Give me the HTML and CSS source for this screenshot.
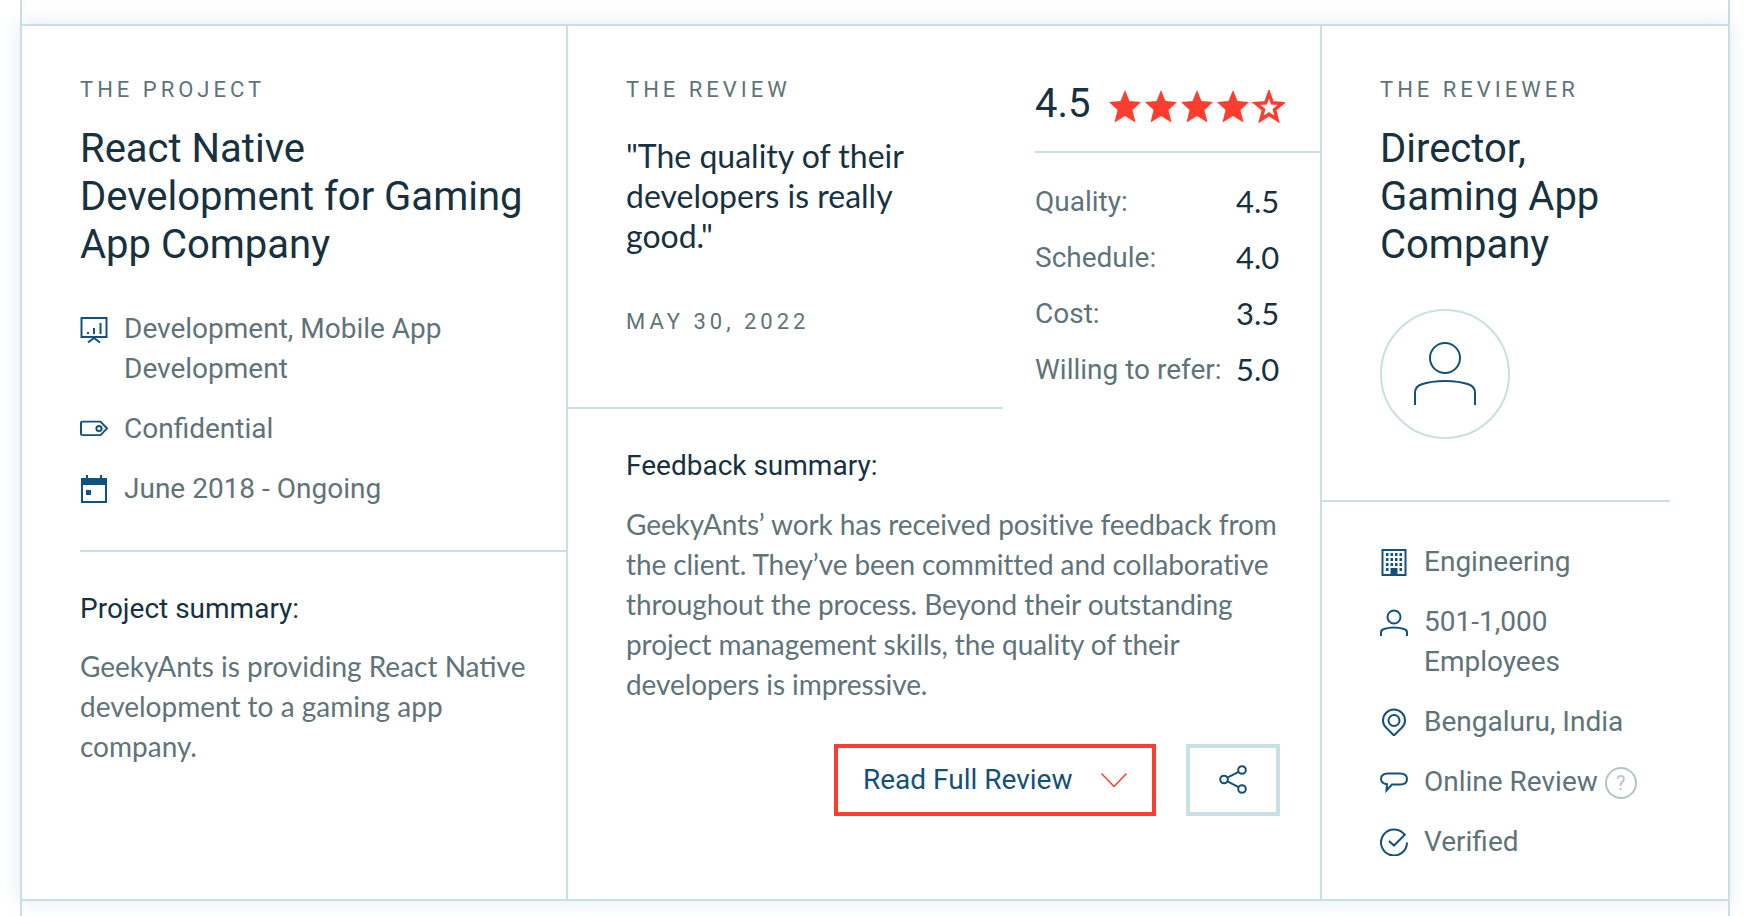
FILE: index.html
```html
<!DOCTYPE html>
<html lang="en">
<head>
    <meta charset="UTF-8">
    <title>Review card</title>
    <link rel="stylesheet" href="styles.css">
</head>
<body>
    <div class="stub stub-top"></div>

    <div class="review-card">

        <!-- Project column -->
        <section class="col col-project">
            <div class="project-head">
                <div class="label">THE PROJECT</div>
                <h3 class="title">React Native Development for Gaming App Company</h3>
                <ul class="facts">
                    <li>
                        <svg class="icon" viewBox="0 0 28 28"><path d="M1.500 3h25v19h-25zM8 19v-2M14 19v-6M20.500 19V8M14 22v1.500M8 27.500l6-4.500 6 4.500"/></svg>
                        <span>Development, Mobile App Development</span>
                    </li>
                    <li>
                        <svg class="icon" viewBox="0 0 28 28"><path d="M2.500 6h18l6.500 8-6.500 8h-18A1.500 1.500 0 0 1 1 20.500v-13A1.500 1.500 0 0 1 2.500 6z" transform="translate(0 1.500) scale(1 .85)"/><circle cx="19" cy="13.500" r="2.600"/></svg>
                        <span>Confidential</span>
                    </li>
                    <li>
                        <svg class="icon" viewBox="0 0 28 28"><path d="M2 4h24v23H2z"/><path class="fill" d="M2 3h24v7H2zM6 0h2v3H6zM20 0h2v3h-2zM6 15h5v5H6z"/></svg>
                        <span>June 2018 - Ongoing</span>
                    </li>
                </ul>
            </div>
            <div class="summary">
                <h4>Project summary:</h4>
                <p>GeekyAnts is providing React Native development to a gaming app company.</p>
            </div>
        </section>

        <!-- Review column -->
        <section class="col col-review">
            <div class="review-top">
                <div class="review-intro">
                    <div class="label">THE REVIEW</div>
                    <p class="quote">"The quality of their developers is really good."</p>
                    <div class="label date">MAY 30, 2022</div>
                </div>
                <div class="rating">
                    <div class="rating-head">
                        <span class="score">4.5</span>
                        <svg class="stars" viewBox="0 0 176 33">
                            <polygon points="16,0 20.500,11 32,12 23.500,20 26.500,32.500 16,26 5.500,32.500 8.500,20 0,12 11.500,11"/>
                            <polygon transform="translate(36 0)" points="16,0 20.500,11 32,12 23.500,20 26.500,32.500 16,26 5.500,32.500 8.500,20 0,12 11.500,11"/>
                            <polygon transform="translate(72 0)" points="16,0 20.500,11 32,12 23.500,20 26.500,32.500 16,26 5.500,32.500 8.500,20 0,12 11.500,11"/>
                            <polygon transform="translate(108 0)" points="16,0 20.500,11 32,12 23.500,20 26.500,32.500 16,26 5.500,32.500 8.500,20 0,12 11.500,11"/>
                            <polygon class="star-empty" transform="translate(144 0)" points="16,3.500 19.300,12.800 29,13.500 21.500,19.700 24,29.500 16,24.200 8,29.500 10.500,19.700 3,13.500 12.700,12.800"/>
                        </svg>
                    </div>
                    <dl class="scores">
                        <dt>Quality:</dt><dd>4.5</dd>
                        <dt>Schedule:</dt><dd>4.0</dd>
                        <dt>Cost:</dt><dd>3.5</dd>
                        <dt>Willing to refer:</dt><dd>5.0</dd>
                    </dl>
                </div>
            </div>
            <div class="summary summary-review">
                <h4>Feedback summary:</h4>
                <p>GeekyAnts’ work has received positive feedback from the client. They’ve been committed and collaborative throughout the process. Beyond their outstanding project management skills, the quality of their developers is impressive.</p>
                <div class="actions">
                    <button class="btn-read">
                        <span>Read Full Review</span>
                        <svg class="chevron" viewBox="0 0 26 14"><path d="M.500.500L13 13.500 25.500.500"/></svg>
                    </button>
                    <button class="btn-share">
                        <svg class="share" viewBox="0 0 28 29"><circle cx="5" cy="14.500" r="3.800"/><circle cx="23" cy="5" r="3.800"/><circle cx="23" cy="24" r="3.800"/><path d="M8.400 12.700l11.200-5.900M8.400 16.300l11.200 5.900"/></svg>
                    </button>
                </div>
            </div>
        </section>

        <!-- Reviewer column -->
        <section class="col col-reviewer">
            <div class="reviewer-head">
                <div class="label">THE REVIEWER</div>
                <h3 class="title">Director, Gaming App Company</h3>
                <div class="avatar">
                    <svg viewBox="0 0 62 62"><circle cx="31" cy="15" r="15"/><path d="M1 62V50c0-5 2-7 6-8.500C14 39 22 38 31 38s17 1 24 3.500c4 1.500 6 3.500 6 8.500v12"/></svg>
                </div>
            </div>
            <ul class="facts facts-reviewer">
                <li>
                    <svg class="icon" viewBox="0 0 28 28"><path d="M2.500 2h23v25h-23z"/><path class="fill" d="M6 5h2.500v3H6zM10.500 5H13v3h-2.500zM15 5h2.500v3H15zM19.500 5H22v3h-2.500zM6 10h2.500v3H6zM10.500 10H13v3h-2.500zM15 10h2.500v3H15zM19.500 10H22v3h-2.500zM6 15h2.500v3H6zM10.500 15H13v3h-2.500zM15 15h2.500v3H15zM19.500 15H22v3h-2.500zM6 20h2.500v3H6zM19.500 20H22v3h-2.500zM10.500 20h7v7h-7z"/></svg>
                    <span>Engineering</span>
                </li>
                <li>
                    <svg class="icon" viewBox="0 0 28 28"><circle cx="14" cy="9" r="6.500"/><path d="M1 28v-3.500c0-2 1-3 3-3.500 3-1 6-1.500 10-1.500s7 .5 10 1.500c2 .5 3 1.500 3 3.500V28"/></svg>
                    <span>501-1,000 Employees</span>
                </li>
                <li>
                    <svg class="icon" viewBox="0 0 28 28"><path d="M14 27.500L6 19.500C4 17.500 3 15 3 12.500a11 11 0 0 1 22 0c0 2.500-1 5-3 7z"/><circle cx="14" cy="12.500" r="5.500"/></svg>
                    <span>Bengaluru, India</span>
                </li>
                <li>
                    <svg class="icon" viewBox="0 0 28 28"><path d="M8 5.500h12c4 0 7 1.500 7 5.500 0 4-3 5.500-7 5.500h-8l-5.500 6 .5-6.300C3.500 15.800 1 14 1 11c0-4 3-5.500 7-5.500z"/></svg>
                    <span>Online Review<i class="help">?</i></span>
                </li>
                <li>
                    <svg class="icon" viewBox="0 0 28 28"><path d="M25 7.500A13 13 0 1 0 27 14.500M9 13l5 4.500L25.500 6"/></svg>
                    <span>Verified</span>
                </li>
            </ul>
        </section>

    </div>

    <div class="stub stub-bottom"></div>
</body>
</html>
```

FILE: styles.css
```css
body {
    margin: 0;
    height: 916px;
    overflow: hidden;
    background-color: #fff;
    font-family: Roboto, sans-serif;
    color: #607379;
}

/* bits of the neighbouring cards, above and below */
.stub {
    width: 1710px;
    box-sizing: border-box;
    margin-left: 20px;
    border-left: 2px solid #c9dfe6;
    border-right: 2px solid #c9dfe6;
}
.stub-top { height: 24px; }
.stub-bottom { height: 15px; }

.review-card {
    display: grid;
    grid-template-columns: 546px 754px 1fr;
    width: 1710px;
    height: 877px;
    box-sizing: border-box;
    margin-left: 20px;
    background-color: #fff;
    border: 2px solid #c9dfe6;
    box-shadow: 0 0 18px rgba(120, 170, 190, 0.24);
}

.col {
    min-width: 0;
    border-right: 2px solid #c9dfe6;
}
.col-reviewer { border-right: none; }

.label {
    font-size: 22px;
    line-height: 24px;
    letter-spacing: 4px;
    white-space: nowrap;
}

.title {
    margin: 23px 0 0;
    font-size: 40px;
    line-height: 48px;
    font-weight: 400;
    color: #17313f;
}

.facts {
    list-style: none;
    margin: 40px 0 0;
    padding: 0;
}
.facts li {
    display: flex;
    margin-bottom: 20px;
    font-size: 28px;
    line-height: 40px;
}
.facts li:last-child { margin-bottom: 0; }

.icon {
    flex: none;
    width: 28px;
    height: 28px;
    margin: 6px 16px 0 0;
    fill: none;
    stroke: #14507c;
    stroke-width: 2;
}
.icon .fill {
    fill: #14507c;
    stroke: none;
}

.help {
    display: inline-block;
    width: 32px;
    height: 32px;
    box-sizing: border-box;
    margin-left: 7px;
    border: 2px solid #b3c3c8;
    border-radius: 50%;
    font-size: 20px;
    line-height: 28px;
    font-style: normal;
    text-align: center;
    color: #b3c3c8;
    vertical-align: 1px;
}

/* project column */
.project-head {
    margin-left: 58px;
    padding: 52px 0 41px;
    border-bottom: 2px solid #c9dfe6;
}
.project-head .title { width: 460px; }
.project-head .facts { padding-right: 80px; }

.summary {
    padding: 37px 30px 0 58px;
}
.summary h4 {
    margin: 0;
    font-size: 28px;
    line-height: 40px;
    font-weight: 400;
    color: #17313f;
}
.summary p {
    margin: 17px 0 0;
    font-family: Lato, sans-serif;
    font-size: 28px;
    line-height: 40px;
}

/* review column */
.review-top {
    display: flex;
    height: 383px;
}
.review-intro {
    width: 435px;
    box-sizing: border-box;
    padding: 52px 30px 0 58px;
    border-bottom: 2px solid #c9dfe6;
}
.quote {
    margin: 34px 0 0;
    font-family: Lato, sans-serif;
    font-size: 32px;
    line-height: 40px;
    color: #17313f;
}
.date { margin-top: 54px; }

.rating {
    flex: 1;
    margin-left: 32px;
}
.rating-head {
    display: flex;
    align-items: center;
    height: 127px;
    box-sizing: border-box;
    padding: 55px 0 24px;
    margin-bottom: 20px;
    border-bottom: 2px solid #c9dfe6;
}
.score {
    font-size: 40px;
    line-height: 48px;
    color: #17313f;
}
.stars {
    width: 176px;
    height: 33px;
    margin: 5px 0 0 18px;
    fill: #ff3d2e;
}
.star-empty {
    fill: none;
    stroke: #ff3d2e;
    stroke-width: 3.500;
}

.scores {
    display: grid;
    grid-template-columns: 201px auto;
    grid-auto-rows: 56px;
    align-items: center;
    margin: 0;
}
.scores dt {
    font-size: 28px;
}
.scores dd {
    margin: 0;
    font-family: Lato, sans-serif;
    font-size: 31px;
    color: #17313f;
}

.summary-review {
    padding: 37px 30px 0 58px;
}
.summary-review p {
    margin-top: 18px;
    letter-spacing: -0.090px;
}

.actions {
    display: flex;
    justify-content: flex-end;
    gap: 30px;
    margin: 40px 10px 0 0;
}
.actions button {
    height: 72px;
    box-sizing: border-box;
    padding-bottom: 2px;
    background-color: #fff;
    cursor: pointer;
    font-family: Roboto, sans-serif;
}
.btn-read {
    display: flex;
    align-items: center;
    justify-content: space-between;
    width: 322px;
    padding-left: 25px;
    padding-right: 25px;
    border: 4px solid #ff3d2e;
    font-size: 28px;
    color: #14507c;
}
.chevron {
    width: 26px;
    height: 14px;
    fill: none;
    stroke: #ff3d2e;
    stroke-width: 1.500;
}
.btn-share {
    display: flex;
    align-items: center;
    justify-content: center;
    width: 94px;
    padding-left: 0;
    padding-right: 0;
    border: 4px solid #c9dfe6;
}
.share {
    width: 28px;
    height: 29px;
    fill: none;
    stroke: #14507c;
    stroke-width: 2;
}

/* reviewer column */
.reviewer-head {
    margin-right: 58px;
    padding: 52px 0 61px 58px;
    border-bottom: 2px solid #c9dfe6;
}
.reviewer-head .title { width: 260px; }
.avatar {
    display: flex;
    justify-content: center;
    width: 130px;
    height: 130px;
    box-sizing: border-box;
    margin-top: 40px;
    padding-top: 32px;
    border: 2px solid #c9dfe6;
    border-radius: 50%;
}
.avatar svg {
    width: 62px;
    height: 62px;
    fill: none;
    stroke: #14507c;
    stroke-width: 2;
    overflow: visible;
}
.facts-reviewer {
    margin: 40px 0 0;
    padding: 0 58px 0 58px;
}
```
